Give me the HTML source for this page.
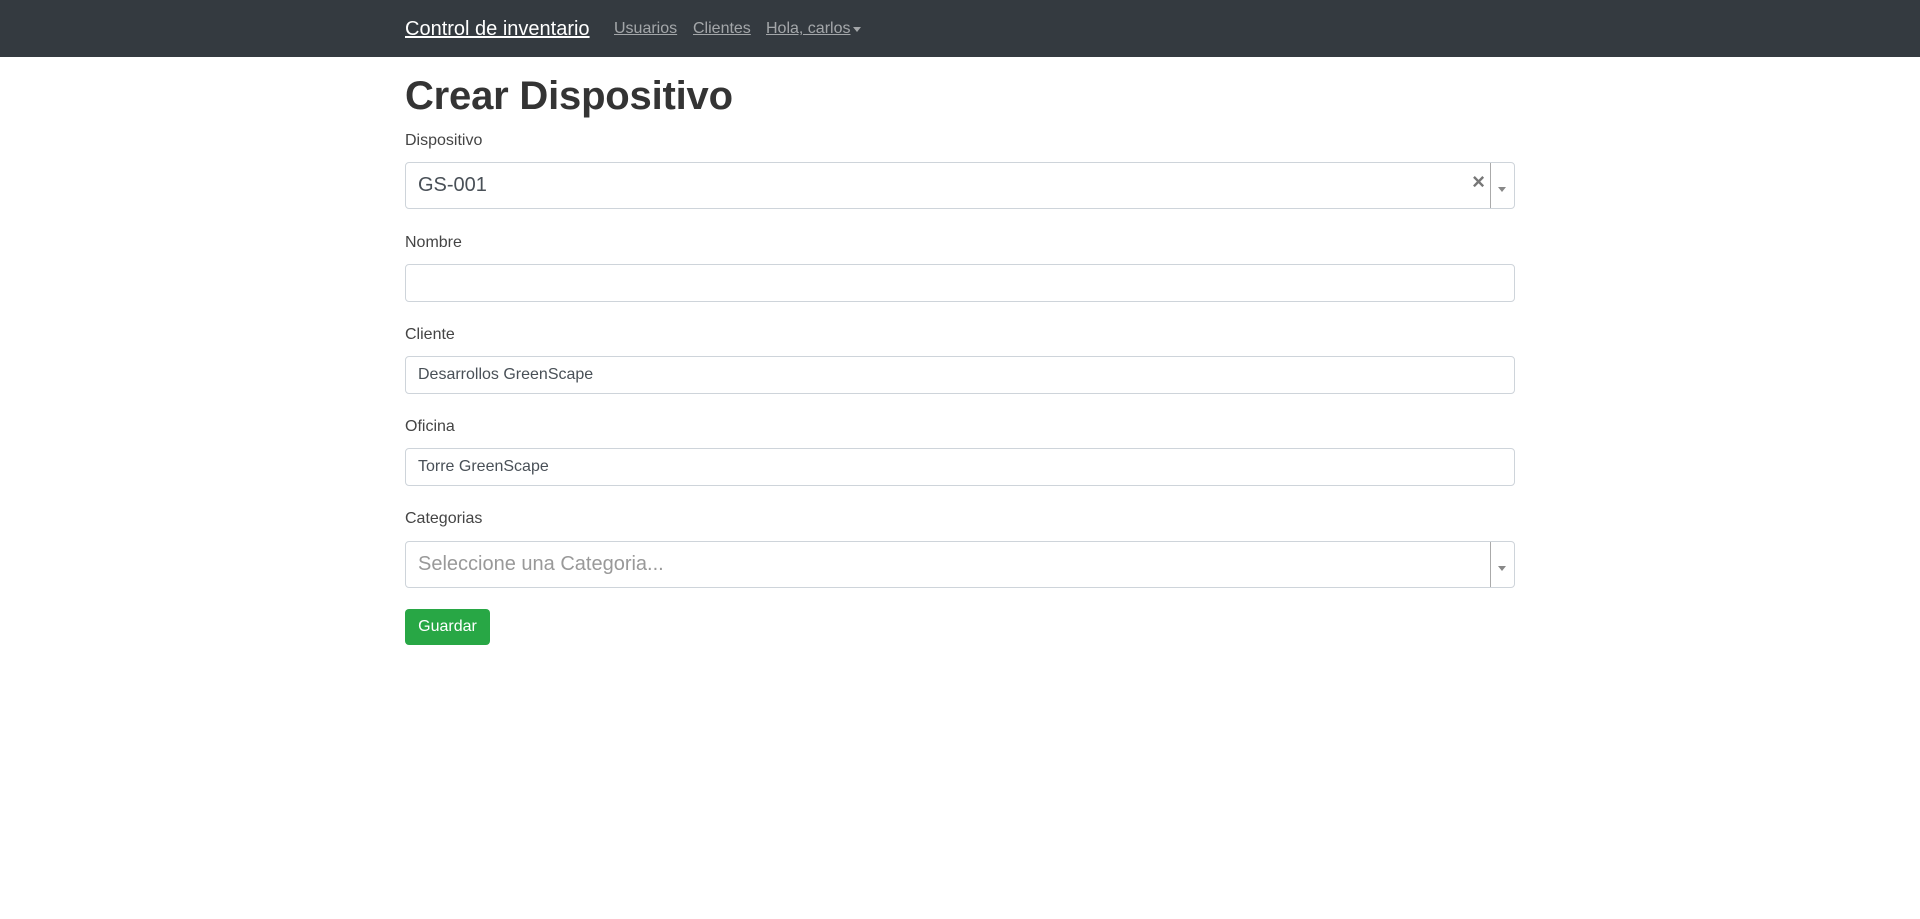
<!DOCTYPE html><html><head><style>
body{margin:0;font-family:"Liberation Sans",Arial,sans-serif;color:#212529;background:#fff}
.nav{height:57px;background:#343a40;position:relative}
.nav a{position:absolute;color:rgba(255,255,255,.55);text-decoration:underline;font-size:16px;top:20px}
.nav .brand{color:#fff;font-size:20px;left:405px;top:18px}
h1{position:absolute;left:405px;top:72px;margin:0;font-size:40px;font-weight:bold;color:#343434;line-height:48px;letter-spacing:-0.2px}
label{position:absolute;left:405px;font-size:16px;color:#444}
.in{position:absolute;left:405px;border:1px solid #ced4da;border-radius:4px;box-sizing:border-box;width:1110px;font-size:16px;color:#495057;padding-left:12px;display:flex;align-items:center}
.sel{font-size:20px}
.div{position:absolute;right:23px;top:0;bottom:0;border-left:1px solid #aaa}
.arr{position:absolute;right:8px;top:50%;margin-top:1px;border:4px solid transparent;border-top:5px solid #888;border-bottom:0}
.x{position:absolute;right:29px;top:8px;font-size:22px;line-height:22px;color:#777;font-weight:bold}
.btn{position:absolute;left:405px;top:609px;width:85px;height:36px;background:#28a745;color:#fff;border-radius:4px;font-size:16px;display:flex;align-items:center;justify-content:center}
</style></head><body>
<div class="nav"><a class="brand">Control de inventario</a><a style="left:614px">Usuarios</a><a style="left:693px">Clientes</a><a style="left:766px">Hola, carlos</a><span style="position:absolute;left:853px;top:27px;border:4px solid transparent;border-top:5px solid rgba(255,255,255,.55);border-bottom:0"></span></div>
<h1>Crear Dispositivo</h1>
<label style="top:132px">Dispositivo</label>
<div class="in sel" style="top:162px;height:47px">GS-001<span class="x">×</span><span class="div"></span><span class="arr"></span></div>
<label style="top:234px">Nombre</label>
<div class="in" style="top:264px;height:38px"></div>
<label style="top:326px">Cliente</label>
<div class="in" style="top:356px;height:38px">Desarrollos GreenScape</div>
<label style="top:418px">Oficina</label>
<div class="in" style="top:448px;height:38px">Torre GreenScape</div>
<label style="top:510px">Categorias</label>
<div class="in sel" style="top:541px;height:47px;color:#999">Seleccione una Categoria...<span class="div"></span><span class="arr"></span></div>
<div class="btn">Guardar</div>
</body></html>
